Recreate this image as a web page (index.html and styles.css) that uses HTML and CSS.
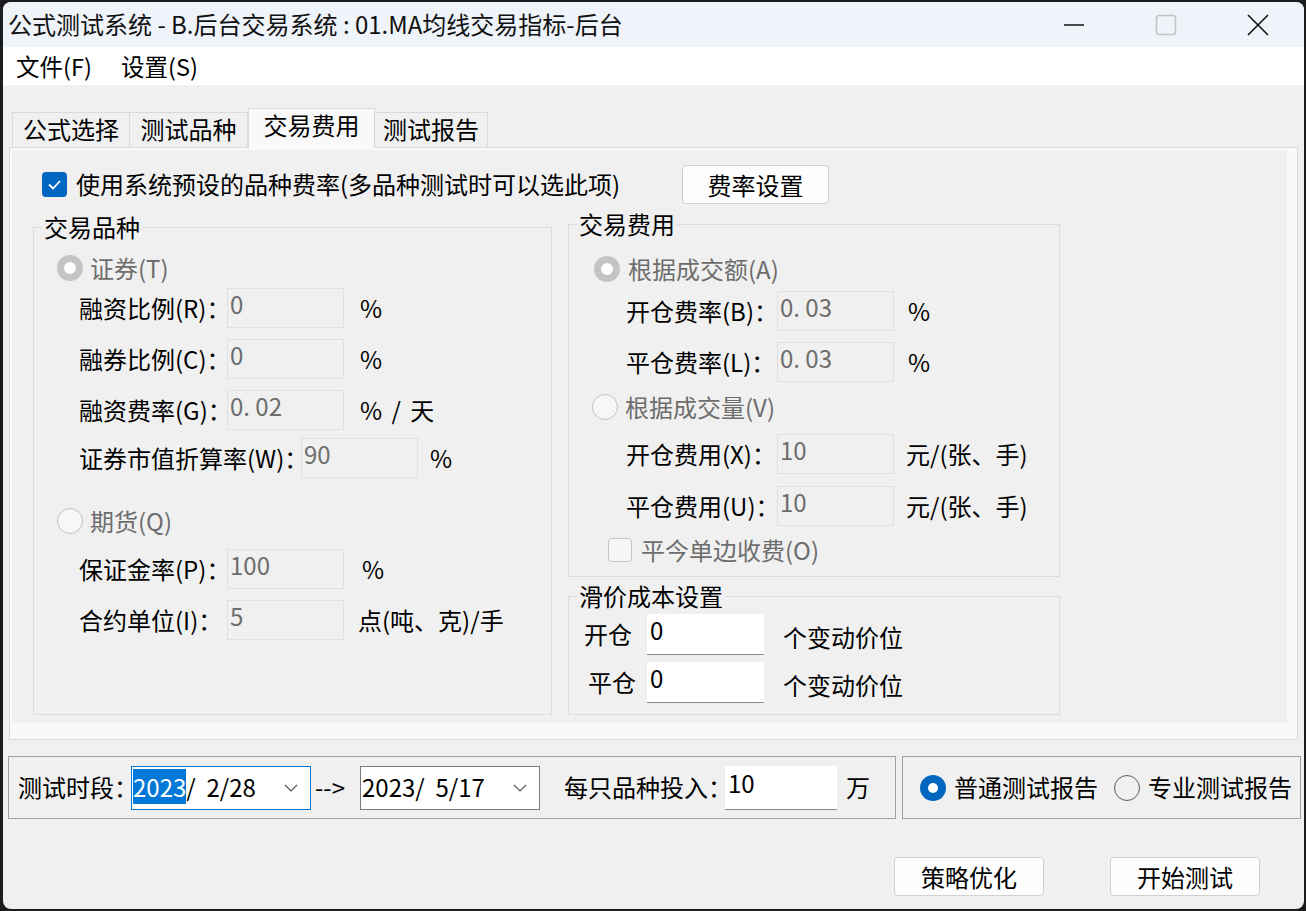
FILE: index.html
```html
<!DOCTYPE html>
<html lang="zh-CN">
<head>
  <meta charset="UTF-8">
  <title>公式测试系统</title>
  <link rel="stylesheet" href="styles.css">
</head>
<body>
<div class="window">

  <!-- title bar -->
  <div class="titlebar">
    <div class="title">公式测试系统 - B.后台交易系统 : 01.MA均线交易指标-后台</div>
    <div class="caption">
      <svg width="22" height="22" viewBox="0 0 22 22"><line x1="1" y1="11" x2="21" y2="11" stroke="#111" stroke-width="1.6"/></svg>
    </div>
    <div class="caption">
      <svg width="22" height="22" viewBox="0 0 22 22"><rect x="1.5" y="1.5" width="19" height="19" rx="2.5" fill="none" stroke="#c4c4c4" stroke-width="1.6"/></svg>
    </div>
    <div class="caption">
      <svg width="22" height="22" viewBox="0 0 22 22"><path d="M1 1 L21 21 M21 1 L1 21" stroke="#111" stroke-width="1.6"/></svg>
    </div>
  </div>

  <!-- menu -->
  <div class="menubar">
    <span class="menu-item">文件(F)</span>
    <span class="menu-item">设置(S)</span>
  </div>

  <!-- tabs -->
  <div class="tabs">
    <div class="tab t1">公式选择</div>
    <div class="tab t2">测试品种</div>
    <div class="tab active">交易费用</div>
    <div class="tab t4">测试报告</div>
  </div>

  <div class="panel">
    <div class="panel-inner">

      <div class="toprow">
        <span class="check on">
          <svg width="25" height="25" viewBox="0 0 25 25"><polyline points="7,12.5 11,16.5 18,9" fill="none" stroke="#fff" stroke-width="1.8"/></svg>
        </span>
        <span class="check-label">使用系统预设的品种费率(多品种测试时可以选此项)</span>
        <button class="btn rate-btn">费率设置</button>
      </div>

      <div class="columns">
        <!-- left: 交易品种 -->
        <fieldset class="group kinds">
          <legend>交易品种</legend>

          <div class="opt first dis"><span class="radio dis-on"></span><span class="opt-text">证券(T)</span></div>

          <div class="row g7"><span class="lbl">融资比例(R)：</span><input class="field" disabled value="0"><span class="unit u16">%</span></div>
          <div class="row"><span class="lbl">融券比例(C)：</span><input class="field" disabled value="0"><span class="unit u16">%</span></div>
          <div class="row"><span class="lbl">融资费率(G)：</span><input class="field" disabled value="0. 02"><span class="unit u16 per-day">% / 天</span></div>
          <div class="row g8"><span class="lbl wide">证券市值折算率(W)：</span><input class="field" disabled value="90"><span class="unit u12">%</span></div>

          <div class="opt futures dis"><span class="radio"></span><span class="opt-text">期货(Q)</span></div>

          <div class="row g15"><span class="lbl">保证金率(P)：</span><input class="field" disabled value="100"><span class="unit u18">%</span></div>
          <div class="row"><span class="lbl">合约单位(I)：</span><input class="field" disabled value="5"><span class="unit u14">点(吨、克)/手</span></div>
        </fieldset>

        <div class="right-col">
          <!-- 交易费用 -->
          <fieldset class="group fees">
            <legend>交易费用</legend>

            <div class="opt by-amount dis"><span class="radio dis-on"></span><span class="opt-text">根据成交额(A)</span></div>
            <div class="row g9 fee"><span class="lbl">开仓费率(B)：</span><input class="field" disabled value="0. 03"><span class="unit u14">%</span></div>
            <div class="row fee"><span class="lbl">平仓费率(L)：</span><input class="field" disabled value="0. 03"><span class="unit u14">%</span></div>

            <div class="opt by-volume dis"><span class="radio"></span><span class="opt-text">根据成交量(V)</span></div>
            <div class="row g14 fee"><span class="lbl">开仓费用(X)：</span><input class="field" disabled value="10"><span class="unit u12">元/(张、手)</span></div>
            <div class="row g12 fee"><span class="lbl">平仓费用(U)：</span><input class="field" disabled value="10"><span class="unit u12">元/(张、手)</span></div>

            <div class="opt today dis"><span class="check off"></span><span class="opt-text">平今单边收费(O)</span></div>
          </fieldset>

          <!-- 滑价成本设置 -->
          <fieldset class="group slip">
            <legend>滑价成本设置</legend>
            <div class="slip-row s1"><span class="slip-lbl">开仓</span><input class="edit" value="0"><span class="slip-unit">个变动价位</span></div>
            <div class="slip-row s2"><span class="slip-lbl close">平仓</span><input class="edit" value="0"><span class="slip-unit">个变动价位</span></div>
          </fieldset>
        </div>
      </div>

    </div>
  </div>

  <!-- bottom controls -->
  <div class="bottom">
    <div class="box period">
      <span class="period-lbl">测试时段：</span>
      <div class="combo focus">
        <span class="combo-text"><span class="sel">2023</span>/&nbsp; 2/28</span>
        <svg class="chev" width="14" height="8" viewBox="0 0 14 8"><polyline points="1,1 7,7 13,1" fill="none" stroke="#555" stroke-width="1.2"/></svg>
      </div>
      <span class="arrow">--&gt;</span>
      <div class="combo">
        <span class="combo-text">2023/&nbsp; 5/17</span>
        <svg class="chev" width="14" height="8" viewBox="0 0 14 8"><polyline points="1,1 7,7 13,1" fill="none" stroke="#555" stroke-width="1.2"/></svg>
      </div>
      <span class="invest-lbl">每只品种投入：</span>
      <input class="edit invest" value="10">
      <span class="wan">万</span>
    </div>
    <div class="box report">
      <span class="radio blue"></span><span class="report-text">普通测试报告</span>
      <span class="radio plain second"></span><span class="report-text">专业测试报告</span>
    </div>
  </div>

  <div class="actions">
    <button class="btn action">策略优化</button>
    <button class="btn action">开始测试</button>
  </div>

</div>
</body>
</html>
```

FILE: styles.css
```css
* { box-sizing: border-box; }
body { margin: 0; background: #1d1d1f; font-family: "Noto Sans CJK SC", "Noto Sans", sans-serif; font-size: 24px; line-height: 1.2; color: #000; white-space: nowrap; }

.window { margin: 2px 0 0 3px; width: 1301px; height: 907px; background: #f0f0f0; border-radius: 8px; overflow: hidden; }

/* title + menu */
.titlebar { height: 45px; background: #eff3fa; display: flex; align-items: center; padding-left: 5px; }
.title { flex: 1; font-size: 24px; color: #111; }
.caption { width: 92px; height: 45px; display: flex; align-items: center; justify-content: center; }
.menubar { height: 38px; background: #fff; display: flex; align-items: center; padding-left: 13px; }
.menu-item { width: 105px; font-size: 23.5px; }

/* tabs */
.tabs { display: flex; align-items: flex-end; height: 39px; margin: 23px 0 0 9px; }
.tab { height: 35px; border: 1px solid #dadada; border-bottom: none; background: #f0f0f0; display: flex; align-items: center; justify-content: center; padding-bottom: 2px; }
.tab + .tab { border-left: none; }
.t1, .t2 { width: 118px; }
.t4 { width: 113px; }
.tab.active { width: 127px; height: 40px; margin-bottom: -1px; background: #f9f9f9; position: relative; border-left: 1px solid #dadada; border-right: 1px solid #dadada; padding-bottom: 6px; }
.tab.active + .tab { border-left: none; }

.panel { margin-left: 6px; width: 1289px; height: 593px; border: 1px solid #dadada; background: #f9f9f9; padding: 2px 10px 16px 2px; }
.panel-inner { height: 100%; background: #f0f0f0; padding-top: 15px; }

/* top checkbox row */
.toprow { display: flex; align-items: center; height: 39px; margin-left: 30px; }
.check { width: 25px; height: 25px; border-radius: 4px; flex: none; }
.check.on { background: #0067c0; }
.check.on svg { display: block; }
.check.off { width: 24px; height: 24px; border: 1px solid #c6c6c6; background: #f6f6f6; }
.check-label { width: 606px; margin-left: 9px; }
.btn { font-family: inherit; font-size: 24px; background: #fdfdfd; border: 1px solid #d0d0d0; border-radius: 4px; color: #000; padding: 0; }
.rate-btn { width: 147px; height: 39px; }

/* group boxes */
.columns { display: flex; gap: 16px; margin-left: 21px; align-items: flex-start; }
.group { margin: 0; padding: 0; border: 1px solid #dcdcdc; min-width: 0; }
.group legend { padding: 0 2px; margin-left: 8px; line-height: 26px; height: 26px; }
.kinds { width: 519px; height: 501px; margin-top: 10px; }
.right-col { width: 492px; margin-top: 7px; }
.fees { height: 366px; }
.slip { height: 132px; margin-top: 6px; }

.opt { display: flex; align-items: center; height: 26px; }
.opt.dis .opt-text { color: #6d6d6d; }
.opt-text { margin-left: 7px; }
.opt.first { margin: 15px 0 0 23px; }
.opt.futures { margin: 30px 0 0 23px; }
.opt.by-amount { margin: 19px 0 0 25px; }
.opt.by-amount .opt-text { margin-left: 8px; }
.opt.by-volume { margin: 12px 0 0 23px; }
.opt.today { margin: 12px 0 0 39px; height: 24px; }
.opt.today .opt-text { margin-left: 9px; }

.radio { width: 26px; height: 26px; border-radius: 50%; border: 1px solid #c2c2c2; background: #f7f7f7; flex: none; position: relative; }
.radio.dis-on { border: none; background: #c4c4c4; }
.radio.dis-on::after { content: ""; position: absolute; left: 7px; top: 7px; width: 12px; height: 12px; border-radius: 50%; background: #fff; }
.radio.blue { border: none; background: #0067c0; }
.radio.blue::after { content: ""; position: absolute; left: 8px; top: 8px; width: 10px; height: 10px; border-radius: 50%; background: #fff; }
.radio.plain { border: 1.5px solid #5c5c5c; background: #f0f0f0; }

.row { display: flex; align-items: center; height: 40px; margin: 11px 0 0 45px; }
.row.g7 { margin-top: 7px; }
.row.g8 { margin-top: 8px; }
.row.g9 { margin-top: 9px; }
.row.g12 { margin-top: 12px; }
.row.g14 { margin-top: 14px; }
.row.g15 { margin-top: 15px; }
.row.fee { margin-left: 57px; }
.lbl { width: 148px; flex: none; }
.lbl.wide { width: 222px; }
.fee .lbl { width: 151px; }
.field { width: 117px; height: 40px; flex: none; border: 1px solid #e0e0e0; background: #f0f0f0; color: #6d6d6d; font-family: inherit; font-size: 24px; padding: 0 2px 9px; }
.u12 { margin-left: 12px; }
.u14 { margin-left: 14px; }
.u16 { margin-left: 16px; }
.u18 { margin-left: 18px; }
.per-day { word-spacing: 4px; }

.slip-row { display: flex; align-items: center; height: 41px; margin-left: 15px; }
.slip-row.s1 { margin-top: 5px; }
.slip-row.s2 { margin-top: 7px; }
.slip-lbl { width: 63px; }
.slip-lbl.close { padding-left: 4px; }
.slip-unit { margin: 6px 0 0 19px; }
.edit { width: 117px; height: 41px; flex: none; border: none; border-bottom: 1px solid #8a8a8a; background: #fff; font-family: inherit; font-size: 24px; padding: 0 3px 9px; color: #000; }

/* bottom */
.bottom { display: flex; gap: 6px; margin: 16px 0 0 5px; }
.box { height: 63px; border: 1px solid #a0a0a0; display: flex; align-items: center; }
.period { width: 888px; padding-left: 9px; }
.period-lbl { width: 113px; flex: none; }
.combo { width: 180px; height: 44px; flex: none; border: 1px solid #7a7a7a; background: #fff; display: flex; align-items: center; justify-content: space-between; padding: 0 12px 0 1px; }
.combo.focus { border-color: #0078d7; }
.sel { background: #0078d7; color: #fff; }
.arrow { width: 49px; flex: none; padding-left: 4px; }
.invest-lbl { margin-left: 24px; width: 161px; flex: none; }
.edit.invest { width: 112px; height: 44px; }
.wan { margin-left: 9px; }
.report { width: 399px; padding-left: 17px; }
.report-text { margin-left: 8px; }
.radio.second { margin-left: 16px; }

.actions { display: flex; justify-content: flex-end; gap: 66px; margin-top: 38px; padding-right: 44px; }
.action { width: 150px; height: 39px; }
```
